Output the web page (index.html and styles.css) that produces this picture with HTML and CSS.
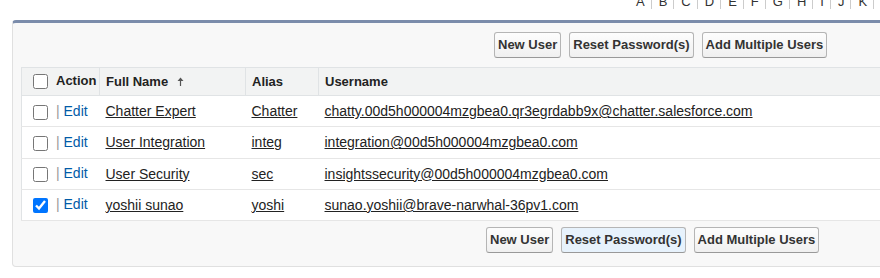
FILE: index.html
```html
<!DOCTYPE html>
<html>
<head>
    <title>Users</title>
    <link rel="stylesheet" href="styles.css">
</head>
<body>
    <div class="rolodex">
        <span>A</span><span>B</span><span>C</span><span>D</span><span>E</span><span>F</span>
        <span>G</span><span>H</span><span>I</span><span>J</span><span>K</span><span>L</span>
        <span>M</span><span>N</span><span>O</span><span>P</span><span>Q</span><span>R</span>
    </div>

    <div class="panel">
        <div class="buttons top">
            <button class="btn">New User</button>
            <button class="btn">Reset Password(s)</button>
            <button class="btn">Add Multiple Users</button>
        </div>

        <table class="list">
            <colgroup>
                <col class="col-action">
                <col class="col-name">
                <col class="col-alias">
                <col>
            </colgroup>
            <thead>
                <tr>
                    <th class="cell-action"><input type="checkbox">Action</th>
                    <th>Full Name
                        <svg class="sort" width="7" height="9" viewBox="0 0 7 9">
                            <path d="M3.5 0.5 L6.5 4 L4.1 4 L4.1 9 L2.9 9 L2.9 4 L0.5 4 Z" fill="#555"/>
                        </svg>
                    </th>
                    <th>Alias</th>
                    <th>Username</th>
                </tr>
            </thead>
            <tbody>
                <tr>
                    <td class="cell-action"><input type="checkbox"><span class="pipe">|</span> <a class="edit" href="#">Edit</a></td>
                    <td><a href="#">Chatter Expert</a></td>
                    <td><a href="#">Chatter</a></td>
                    <td><a href="#">chatty.00d5h000004mzgbea0.qr3egrdabb9x@chatter.salesforce.com</a></td>
                </tr>
                <tr>
                    <td class="cell-action"><input type="checkbox"><span class="pipe">|</span> <a class="edit" href="#">Edit</a></td>
                    <td><a href="#">User Integration</a></td>
                    <td><a href="#">integ</a></td>
                    <td><a href="#">integration@00d5h000004mzgbea0.com</a></td>
                </tr>
                <tr>
                    <td class="cell-action"><input type="checkbox"><span class="pipe">|</span> <a class="edit" href="#">Edit</a></td>
                    <td><a href="#">User Security</a></td>
                    <td><a href="#">sec</a></td>
                    <td><a href="#">insightssecurity@00d5h000004mzgbea0.com</a></td>
                </tr>
                <tr>
                    <td class="cell-action"><input type="checkbox" checked><span class="pipe">|</span> <a class="edit" href="#">Edit</a></td>
                    <td><a href="#">yoshii sunao</a></td>
                    <td><a href="#">yoshi</a></td>
                    <td><a href="#">sunao.yoshii@brave-narwhal-36pv1.com</a></td>
                </tr>
            </tbody>
        </table>

        <div class="buttons bottom">
            <button class="btn">New User</button>
            <button class="btn btn-hover">Reset Password(s)</button>
            <button class="btn">Add Multiple Users</button>
        </div>
    </div>
</body>
</html>
```

FILE: styles.css
```css
/* Base */
* {
    box-sizing: border-box;
}

body {
    margin: 0;
    font-family: "Liberation Sans", Arial, sans-serif;
    color: #222;
    background-color: #fff;
    overflow: hidden;
}

/* Letter filter along the top */
.rolodex {
    display: flex;
    margin-top: -6px;
    padding-left: 629px;
    height: 15px;
    font-size: 13px;
    line-height: 15px;
    color: #333;
    white-space: nowrap;
}

.rolodex span {
    flex-shrink: 0;
    padding: 0 6px 0 7px;
    border-right: 1px solid #ccc;
}

/* Panel */
.panel {
    margin: 11px 0 0 12px;
    width: 920px;
    padding: 9px 0 13px 0;
    background-color: #f8f8f8;
    border: 1px solid #e0e0e0;
    border-top: 3px solid #7b8cab;
    border-radius: 4px;
}

.buttons {
    display: flex;
    gap: 8px;
}

.buttons.top {
    padding-left: 481px;
}

.buttons.bottom {
    padding-left: 473px;
    margin-top: 6px;
}

.btn {
    font: bold 13px "Liberation Sans", Arial, sans-serif;
    line-height: 16px;
    color: #333;
    padding: 4px 3px;
    border: 1px solid #b5b5b5;
    border-bottom-color: #999;
    border-radius: 3px;
    background: linear-gradient(#fdfdfd, #f0f0f0);
    cursor: pointer;
}

.btn-hover {
    background: #e7f2fc;
}

/* List table */
.list {
    margin: 9px 0 0 8px;
    width: 900px;
    table-layout: fixed;
    border-collapse: collapse;
    border: 1px solid #e0e3e5;
    background-color: #fff;
}

.col-action {
    width: 78px;
}

.col-name {
    width: 146px;
}

.col-alias {
    width: 73px;
}

.list th {
    height: 28px;
    padding: 0 6px;
    font-size: 13px;
    font-weight: bold;
    text-align: left;
    color: #222;
    background-color: #f2f3f3;
    border-left: 1px solid #e0e3e5;
    border-bottom: 1px solid #e0e3e5;
    white-space: nowrap;
}

.list td {
    height: 31.25px;
    padding: 0 6px;
    font-size: 14px;
    border-bottom: 1px solid #e6e6e6;
    white-space: nowrap;
}

.list .cell-action {
    padding-left: 11px;
    border-left: none;
}

.list input {
    width: 15px;
    height: 15px;
    margin: 0 8px 0 0;
    vertical-align: middle;
}

.list th input {
    position: relative;
    top: -1px;
}

.sort {
    margin-left: 5px;
    vertical-align: 0;
}

.list a {
    color: #222;
    text-decoration: underline;
}

.list a.edit {
    color: #015ba7;
    text-decoration: none;
}

.pipe {
    color: #999;
}
```
